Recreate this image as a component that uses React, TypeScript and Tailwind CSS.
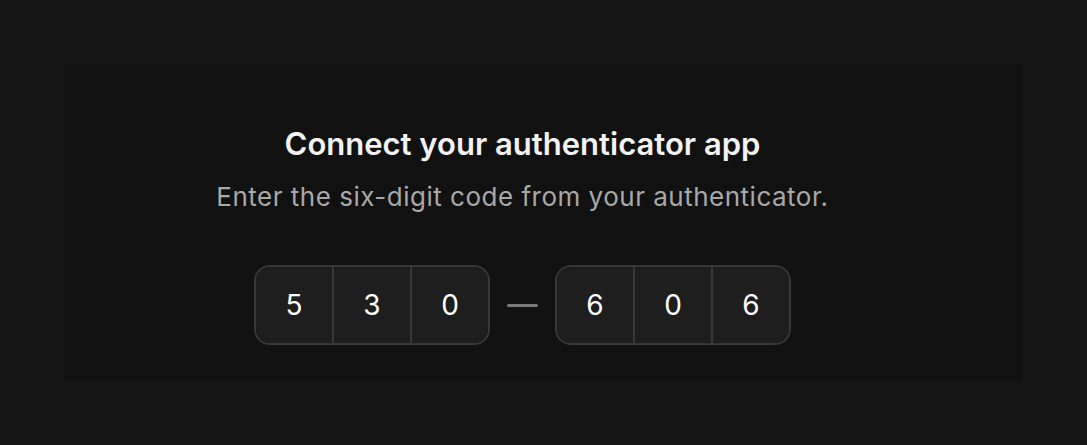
import React from "react";

const Cell = ({ d, last }: { d: string; last?: boolean }) => (
  <div
    className={`flex h-full items-center justify-center bg-[#1e1e1e] text-[28px] font-normal text-white ${
      last ? "w-[76px]" : "w-[78px] border-r-2 border-[#383838]"
    }`}
  >
    {d}
  </div>
);

const Group = ({ digits }: { digits: string[] }) => (
  <div className="flex h-[80px] overflow-hidden rounded-[16px] border-2 border-[#383838]">
    {digits.map((d, i) => (
      <Cell key={i} d={d} last={i === digits.length - 1} />
    ))}
  </div>
);

export default function App() {
  return (
    <div
      className="min-h-[445px] w-full bg-[#161616] p-[64px]"
      style={{ fontFamily: "Inter, 'Noto Sans', sans-serif" }}
    >
      <div className="flex h-[317px] w-[958px] flex-col items-center bg-[#111111] pr-[41px] pt-[60px]">
        <h1 className="text-[31px] font-semibold leading-[40px] text-[#f2f2f2]">
          Connect your authenticator app
        </h1>
        <p className="mt-[17px] text-[26px] leading-[32px] tracking-[0.5px] text-[#a8a8a8]">
          Enter the six-digit code from your authenticator.
        </p>
        <div className="mt-[52px] flex items-center gap-[17px]">
          <Group digits={["5", "3", "0"]} />
          <div className="h-[3px] w-[31px] rounded-full bg-[#7a7a7a]" />
          <Group digits={["6", "0", "6"]} />
        </div>
      </div>
    </div>
  );
}
